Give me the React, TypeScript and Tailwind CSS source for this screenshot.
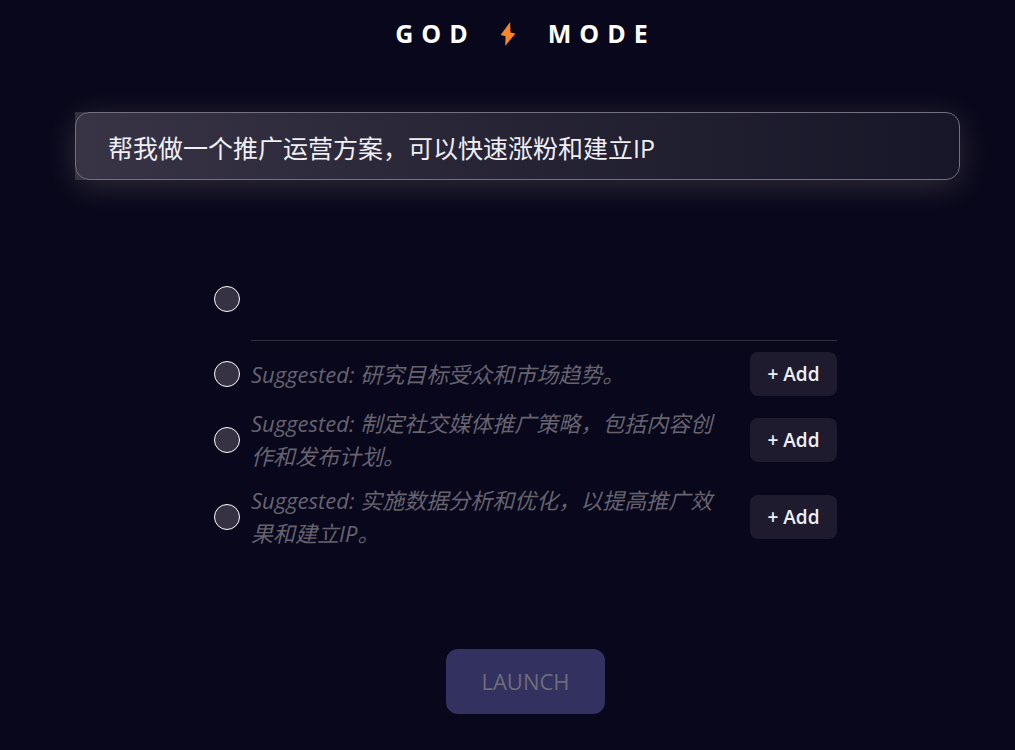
import { useState } from 'react'

const suggestions = [
  '研究目标受众和市场趋势。',
  '制定社交媒体推广策略，包括内容创作和发布计划。',
  '实施数据分析和优化，以提高推广效果和建立IP。',
]

function Bolt() {
  return (
    <svg viewBox="0 0 16 26" className="h-[26px] w-4" fill="#ff8427" aria-hidden="true">
      <path d="M10.2 1 0.6 14 5.6 15.2 5.2 25 15.4 12.4 10.4 11.6Z" />
    </svg>
  )
}

function StepMarker({ label }: { label: string }) {
  return (
    <input
      type="checkbox"
      aria-label={label}
      className="size-[26px] shrink-0 appearance-none rounded-full border border-white bg-[#363244]"
    />
  )
}

function SuggestionRow({ text }: { text: string }) {
  return (
    <li className="flex items-center">
      <StepMarker label={text} />
      <p className="ml-[11px] flex-1 text-[22px] leading-[33px] text-[#66636f] italic">
        {`Suggested: ${text}`}
      </p>
      <button className="ml-[22px] h-11 w-[87px] shrink-0 rounded-lg bg-[#1d1b2d] text-[19px] font-semibold text-[#f0eff4]">
        + Add
      </button>
    </li>
  )
}

export default function App() {
  const [goal, setGoal] = useState('帮我做一个推广运营方案，可以快速涨粉和建立IP')
  const [step, setStep] = useState('')

  return (
    <main className="min-h-screen bg-[#09071b] pl-9 font-['Open_Sans','Noto_Sans_CJK_SC',sans-serif]">
      <h1 className="flex items-start justify-center pt-[15px] text-[25px] leading-9 font-bold tracking-[8px] text-white">
        <span>GOD</span>
        <span className="mt-[6px] mr-8 ml-6"><Bolt /></span>
        <span>MODE</span>
      </h1>

      {/* Goal */}
      <div className="mt-[61px] mr-[55px] ml-[39px] bg-linear-to-r from-[#2d2b38] from-[8px] to-transparent to-[16px]">
        <input
          type="text"
          aria-label="Goal"
          value={goal}
          onChange={(e) => setGoal(e.target.value)}
          className="block h-[68px] w-full rounded-[14px] border border-[#747084] bg-linear-to-r from-[#383446] via-[#262434] to-[#171628] px-8 pt-px text-[25px] text-[#f0eff4] shadow-[0_6px_32px_rgba(255,240,220,0.16)] outline-none"
        />
      </div>

      {/* Steps */}
      <ul className="mx-auto mt-[77px] flex max-w-[623px] flex-col gap-[11px]">
        <li className="flex items-center">
          <StepMarker label="New step" />
          <textarea
            aria-label="New step text"
            value={step}
            onChange={(e) => setStep(e.target.value)}
            className="ml-[11px] block h-[84px] flex-1 resize-none border-b border-[#302e3d] text-[22px] leading-[33px] text-[#f0eff4] outline-none"
          />
        </li>
        {suggestions.map((s) => (
          <SuggestionRow key={s} text={s} />
        ))}
      </ul>

      <div className="mt-[99px] flex justify-center pb-9">
        <button disabled className="h-[65px] w-[159px] rounded-xl bg-[#33315f] text-[22px] text-[#6e6c7b]">
          LAUNCH
        </button>
      </div>
    </main>
  )
}
